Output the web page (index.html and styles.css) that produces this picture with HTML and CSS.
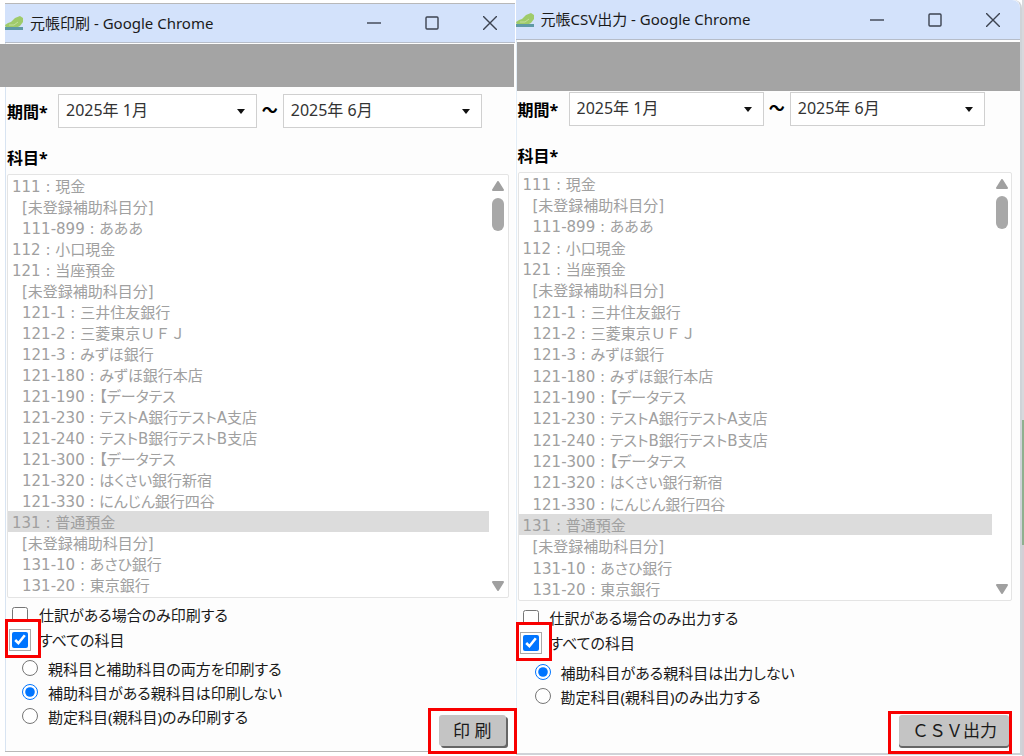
FILE: index.html
```
<!DOCTYPE html>
<html lang="ja">
<head>
  <meta charset="UTF-8" />
  <meta name="viewport" content="width=device-width, initial-scale=1" />
  <title>元帳印刷 / 元帳CSV出力</title>
  <link rel="stylesheet" href="styles.css">
</head>
<body>
  <!-- 元帳印刷 -->
  <section class="window print">
    <header class="titlebar">
      <svg class="favicon" viewBox="0 0 18 16" width="18" height="16" aria-hidden="true">
        <path d="M0 10l3-2 3-1 4-4 5-2 3 2v4l-3 4-4 2H1z" fill="#9fcb6a"/>
        <path d="M4 10l5 0 4-3" fill="none" stroke="#c3dfa0"/>
        <path d="M0 12h18v3H0z" fill="#5f9aa6"/>
      </svg>
      <span class="caption">元帳印刷 - Google Chrome</span>
      <button class="win-btn" type="button" aria-label="最小化"><svg viewBox="0 0 14 14" width="14" height="14"><path d="M0 7h14"/></svg></button>
      <button class="win-btn" type="button" aria-label="最大化"><svg viewBox="0 0 14 14" width="14" height="14"><rect x="1" y="1" width="12" height="12" rx="1"/></svg></button>
      <button class="win-btn" type="button" aria-label="閉じる"><svg viewBox="0 0 14 14" width="14" height="14"><path d="M0 0l14 14M14 0L0 14"/></svg></button>
    </header>
    <div class="banner"></div>

    <form class="form">
      <div class="period">
        <label class="heading" for="print-from">期間*</label>
        <span class="month"><select id="print-from"><option>2025年 1月</option></select></span>
        <span class="tilde">～</span>
        <span class="month"><select id="print-to" aria-label="期間の終わり"><option>2025年 6月</option></select></span>
      </div>

      <label class="heading subject" for="print-list">科目*</label>
      <div class="listbox">
        <select id="print-list" size="20" disabled>
          <option>111 : 現金</option>
          <option class="sub">[未登録補助科目分]</option>
          <option class="sub">111-899 : あああ</option>
          <option>112 : 小口現金</option>
          <option>121 : 当座預金</option>
          <option class="sub">[未登録補助科目分]</option>
          <option class="sub">121-1 : 三井住友銀行</option>
          <option class="sub wide">121-2 : 三菱東京ＵＦＪ</option>
          <option class="sub">121-3 : みずほ銀行</option>
          <option class="sub">121-180 : みずほ銀行本店</option>
          <option class="sub">121-190 : 【データテス</option>
          <option class="sub">121-230 : テストA銀行テストA支店</option>
          <option class="sub">121-240 : テストB銀行テストB支店</option>
          <option class="sub">121-300 : 【データテス</option>
          <option class="sub">121-320 : はくさい銀行新宿</option>
          <option class="sub">121-330 : にんじん銀行四谷</option>
          <option selected>131 : 普通預金</option>
          <option class="sub">[未登録補助科目分]</option>
          <option class="sub">131-10 : あさひ銀行</option>
          <option class="sub">131-20 : 東京銀行</option>
        </select>
        <div class="scrollbar" aria-hidden="true">
          <svg viewBox="0 0 14 10" width="14" height="10"><path d="M7 1l5 8H2z"/></svg>
          <span class="thumb"></span>
          <svg class="down" viewBox="0 0 14 10" width="14" height="10"><path d="M7 9L2 1h10z"/></svg>
        </div>
      </div>

      <label class="check"><span class="box"><input type="checkbox"></span>仕訳がある場合のみ印刷する</label>
      <label class="check"><span class="box marked"><input type="checkbox" checked></span>すべての科目</label>
      <div class="bottom">
        <div class="radios">
          <label><input type="radio" name="print-scope">親科目と補助科目の両方を印刷する</label>
          <label><input type="radio" name="print-scope" checked>補助科目がある親科目は印刷しない</label>
          <label><input type="radio" name="print-scope">勘定科目(親科目)のみ印刷する</label>
        </div>
        <div class="action"><button class="submit" type="button">印 刷</button></div>
      </div>
    </form>
  </section>

  <!-- 元帳CSV出力 -->
  <section class="window csv">
    <header class="titlebar">
      <svg class="favicon" viewBox="0 0 18 16" width="18" height="16" aria-hidden="true">
        <path d="M0 10l3-2 3-1 4-4 5-2 3 2v4l-3 4-4 2H1z" fill="#9fcb6a"/>
        <path d="M4 10l5 0 4-3" fill="none" stroke="#c3dfa0"/>
        <path d="M0 12h18v3H0z" fill="#5f9aa6"/>
      </svg>
      <span class="caption">元帳CSV出力 - Google Chrome</span>
      <button class="win-btn" type="button" aria-label="最小化"><svg viewBox="0 0 14 14" width="14" height="14"><path d="M0 7h14"/></svg></button>
      <button class="win-btn" type="button" aria-label="最大化"><svg viewBox="0 0 14 14" width="14" height="14"><rect x="1" y="1" width="12" height="12" rx="1"/></svg></button>
      <button class="win-btn" type="button" aria-label="閉じる"><svg viewBox="0 0 14 14" width="14" height="14"><path d="M0 0l14 14M14 0L0 14"/></svg></button>
    </header>
    <div class="banner"></div>

    <form class="form">
      <div class="period">
        <label class="heading" for="csv-from">期間*</label>
        <span class="month"><select id="csv-from"><option>2025年 1月</option></select></span>
        <span class="tilde">～</span>
        <span class="month"><select id="csv-to" aria-label="期間の終わり"><option>2025年 6月</option></select></span>
      </div>

      <label class="heading subject" for="csv-list">科目*</label>
      <div class="listbox">
        <select id="csv-list" size="20" disabled>
          <option>111 : 現金</option>
          <option class="sub">[未登録補助科目分]</option>
          <option class="sub">111-899 : あああ</option>
          <option>112 : 小口現金</option>
          <option>121 : 当座預金</option>
          <option class="sub">[未登録補助科目分]</option>
          <option class="sub">121-1 : 三井住友銀行</option>
          <option class="sub wide">121-2 : 三菱東京ＵＦＪ</option>
          <option class="sub">121-3 : みずほ銀行</option>
          <option class="sub">121-180 : みずほ銀行本店</option>
          <option class="sub">121-190 : 【データテス</option>
          <option class="sub">121-230 : テストA銀行テストA支店</option>
          <option class="sub">121-240 : テストB銀行テストB支店</option>
          <option class="sub">121-300 : 【データテス</option>
          <option class="sub">121-320 : はくさい銀行新宿</option>
          <option class="sub">121-330 : にんじん銀行四谷</option>
          <option selected>131 : 普通預金</option>
          <option class="sub">[未登録補助科目分]</option>
          <option class="sub">131-10 : あさひ銀行</option>
          <option class="sub">131-20 : 東京銀行</option>
        </select>
        <div class="scrollbar" aria-hidden="true">
          <svg viewBox="0 0 14 10" width="14" height="10"><path d="M7 1l5 8H2z"/></svg>
          <span class="thumb"></span>
          <svg class="down" viewBox="0 0 14 10" width="14" height="10"><path d="M7 9L2 1h10z"/></svg>
        </div>
      </div>

      <label class="check"><span class="box"><input type="checkbox"></span>仕訳がある場合のみ出力する</label>
      <label class="check"><span class="box marked"><input type="checkbox" checked></span>すべての科目</label>
      <div class="bottom">
        <div class="radios">
          <label><input type="radio" name="csv-scope" checked>補助科目がある親科目は出力しない</label>
          <label><input type="radio" name="csv-scope">勘定科目(親科目)のみ出力する</label>
        </div>
        <div class="action"><button class="submit" type="button">ＣＳＶ出力</button></div>
      </div>
    </form>
  </section>
  <div class="backdrop"></div>
</body>
</html>
```
FILE: styles.css
```
:root {
  --ui-font: "DejaVu Sans", "Noto Sans CJK JP", sans-serif;
  --title-bg: #d3e2fb;
  --banner: #a4a4a4;
  --muted: #a0a0a0;
  --mark: #f80000;
}
*, *::before {
  box-sizing: border-box;
}
body {
  margin: 0;
  min-height: 100vh;
  display: flex;
  background: #fff;
  color: #1a1a1a;
  font-family: "Noto Sans", "Noto Sans CJK JP", sans-serif;
  font-size: 15px;
  font-feature-settings: "palt";
}
button, select {
  font: inherit;
  font-feature-settings: inherit;
  color: inherit;
}
input {
  width: 16px;
  height: 16px;
  margin: 0;
}

.window {
  min-width: 0;
  display: flex;
  flex-direction: column;
  background: #fdfdfd;
}
.print {
  flex: 510;
  margin: 3px 0 4px 5px;
  border: solid #b8b8b8;
  border-width: 1px 0 1px 0;
  box-shadow: inset 1px 0 #d8e4f2;
}
.csv {
  flex: 505;
  margin: 0 0 1px 1px;
  border: solid #d0d3d8;
  border-width: 0 2px 2px 0;
  border-top-right-radius: 8px;
  box-shadow: inset 1px 0 #e3edf6;
}

.titlebar {
  display: flex;
  align-items: center;
  height: 39px;
  padding-right: 18px;
  background: var(--title-bg);
  border-bottom: 1px solid #b6bdc9;
}
.csv .titlebar {
  height: 40px;
  padding-right: 20px;
  border-top-right-radius: 8px;
}
.caption {
  flex: 1;
  margin-left: 7px;
  padding-bottom: 2px;
  white-space: nowrap;
  font-feature-settings: normal;
}
.win-btn {
  display: flex;
  margin-left: 44px;
  padding: 0;
  border: none;
  background: none;
}
.win-btn svg {
  fill: none;
  stroke: #3c4350;
  stroke-width: 1.4;
}

.banner {
  height: 43px;
  margin: 1px 1px 0 -5px;
  background: var(--banner);
}
.csv .banner {
  height: 49px;
  margin: 2px 0 0 1px;
}

.form {
  flex: 1;
  display: flex;
  flex-direction: column;
  padding: 7px 6px 0 2px;
}
.csv .form {
  padding: 1px 8px 0 2px;
}
.heading {
  font-size: 16px;
  font-weight: bold;
  color: #000;
}
.period {
  display: flex;
  align-items: center;
  padding-right: 27px;
}
.period .heading {
  width: 51px;
}
.month {
  position: relative;
  flex: 1;
}
.month::after {
  content: "";
  position: absolute;
  right: 12px;
  top: 15px;
  border: 4px solid transparent;
  border-top: 5px solid #111;
  border-bottom: none;
  pointer-events: none;
}
.month select {
  display: block;
  width: 100%;
  height: 34px;
  padding: 0 7px 2px;
  border: 1px solid #d0d0d0;
  border-radius: 0;
  background: #fff;
  color: #333;
  appearance: none;
  font-size: 16px;
}
.tilde {
  width: 26px;
  padding-bottom: 4px;
  text-align: center;
  font-family: "Noto Sans CJK JP", sans-serif;
  font-size: 16px;
  font-weight: bold;
  line-height: 24px;
  color: #000;
}

.subject {
  margin-top: 18px;
  line-height: 24px;
}
.listbox {
  display: flex;
  margin: 4px 0;
  border: 1px solid #e4e4e4;
  border-radius: 2px;
  background: #fff;
}
.listbox select {
  flex: 1;
  min-width: 0;
  height: 422px;
  padding: 0;
  border: none;
  border-radius: 0;
  background: none;
  overflow: hidden;
  opacity: 1;
  font-family: var(--ui-font);
}
.csv .listbox select {
  height: 427px;
}
.listbox option {
  height: 21px;
  min-height: 21px;
  padding: 0 4px;
  line-height: 21px;
  color: var(--muted);
}
.csv .listbox option:nth-child(3n) {
  height: 22px;
  min-height: 22px;
}
.listbox option.sub {
  padding-left: 14px;
}
.listbox option.wide {
  font-feature-settings: normal;
}
.listbox option:checked {
  background: #dcdcdc linear-gradient(#dcdcdc, #dcdcdc);
}
.scrollbar {
  width: 19px;
  padding: 6px 0;
  display: flex;
  flex-direction: column;
  align-items: center;
}
.scrollbar svg {
  fill: var(--muted);
  stroke: var(--muted);
  stroke-width: 2;
  stroke-linejoin: round;
}
.thumb {
  width: 12px;
  height: 33px;
  margin-top: 7px;
  border-radius: 6px;
  background: #a8a8a8;
}
.scrollbar .down {
  margin-top: auto;
}

.check {
  display: flex;
  align-items: center;
  height: 25px;
  padding-left: 5px;
}
.box {
  display: flex;
  width: 27px;
}
.marked {
  position: relative;
  z-index: 1;
}
/* red frame round the ticked box */
.marked::before {
  content: "";
  position: absolute;
  z-index: -1;
  left: -7px;
  top: -13px;
  width: 36px;
  height: 39px;
  border: 3px solid var(--mark);
  background: #fff;
}
.marked input {
  outline: 1px solid #aaa;
  outline-offset: 2px;
}
.bottom {
  flex: 1;
  display: flex;
  justify-content: space-between;
}
.radios {
  padding: 4px 0 0 15px;
}
.csv .radios {
  padding: 5px 0 0 17px;
}
.radios label {
  display: flex;
  align-items: center;
  gap: 10px;
  height: 24px;
}
.action {
  position: relative;
  align-self: flex-end;
  margin: 0 3px 5px 0;
}
.action::before {
  content: "";
  position: absolute;
  inset: -7px -11px -8px -11px;
  border: 3px solid var(--mark);
}
.submit {
  position: relative;
  display: block;
  height: 31px;
  padding: 0 14px;
  border: none;
  border-radius: 3px;
  background: #c4c4c4;
  box-shadow: 2px 2px #666;
  font-size: 17px;
  font-feature-settings: normal;
  line-height: 30px;
}
.csv .action {
  margin: 0 3px 7px 0;
}
.csv .action::before {
  inset: -4px -3px -8px -11px;
}
.csv .submit {
  padding: 0 12px 0 13px;
  box-shadow: 0 2px #666;
}

.backdrop {
  width: 2px;
  background: linear-gradient(#d8d8dc 420px, #8fb08f 420px, #8fb08f 545px, #d4ced4 545px);
}
```
